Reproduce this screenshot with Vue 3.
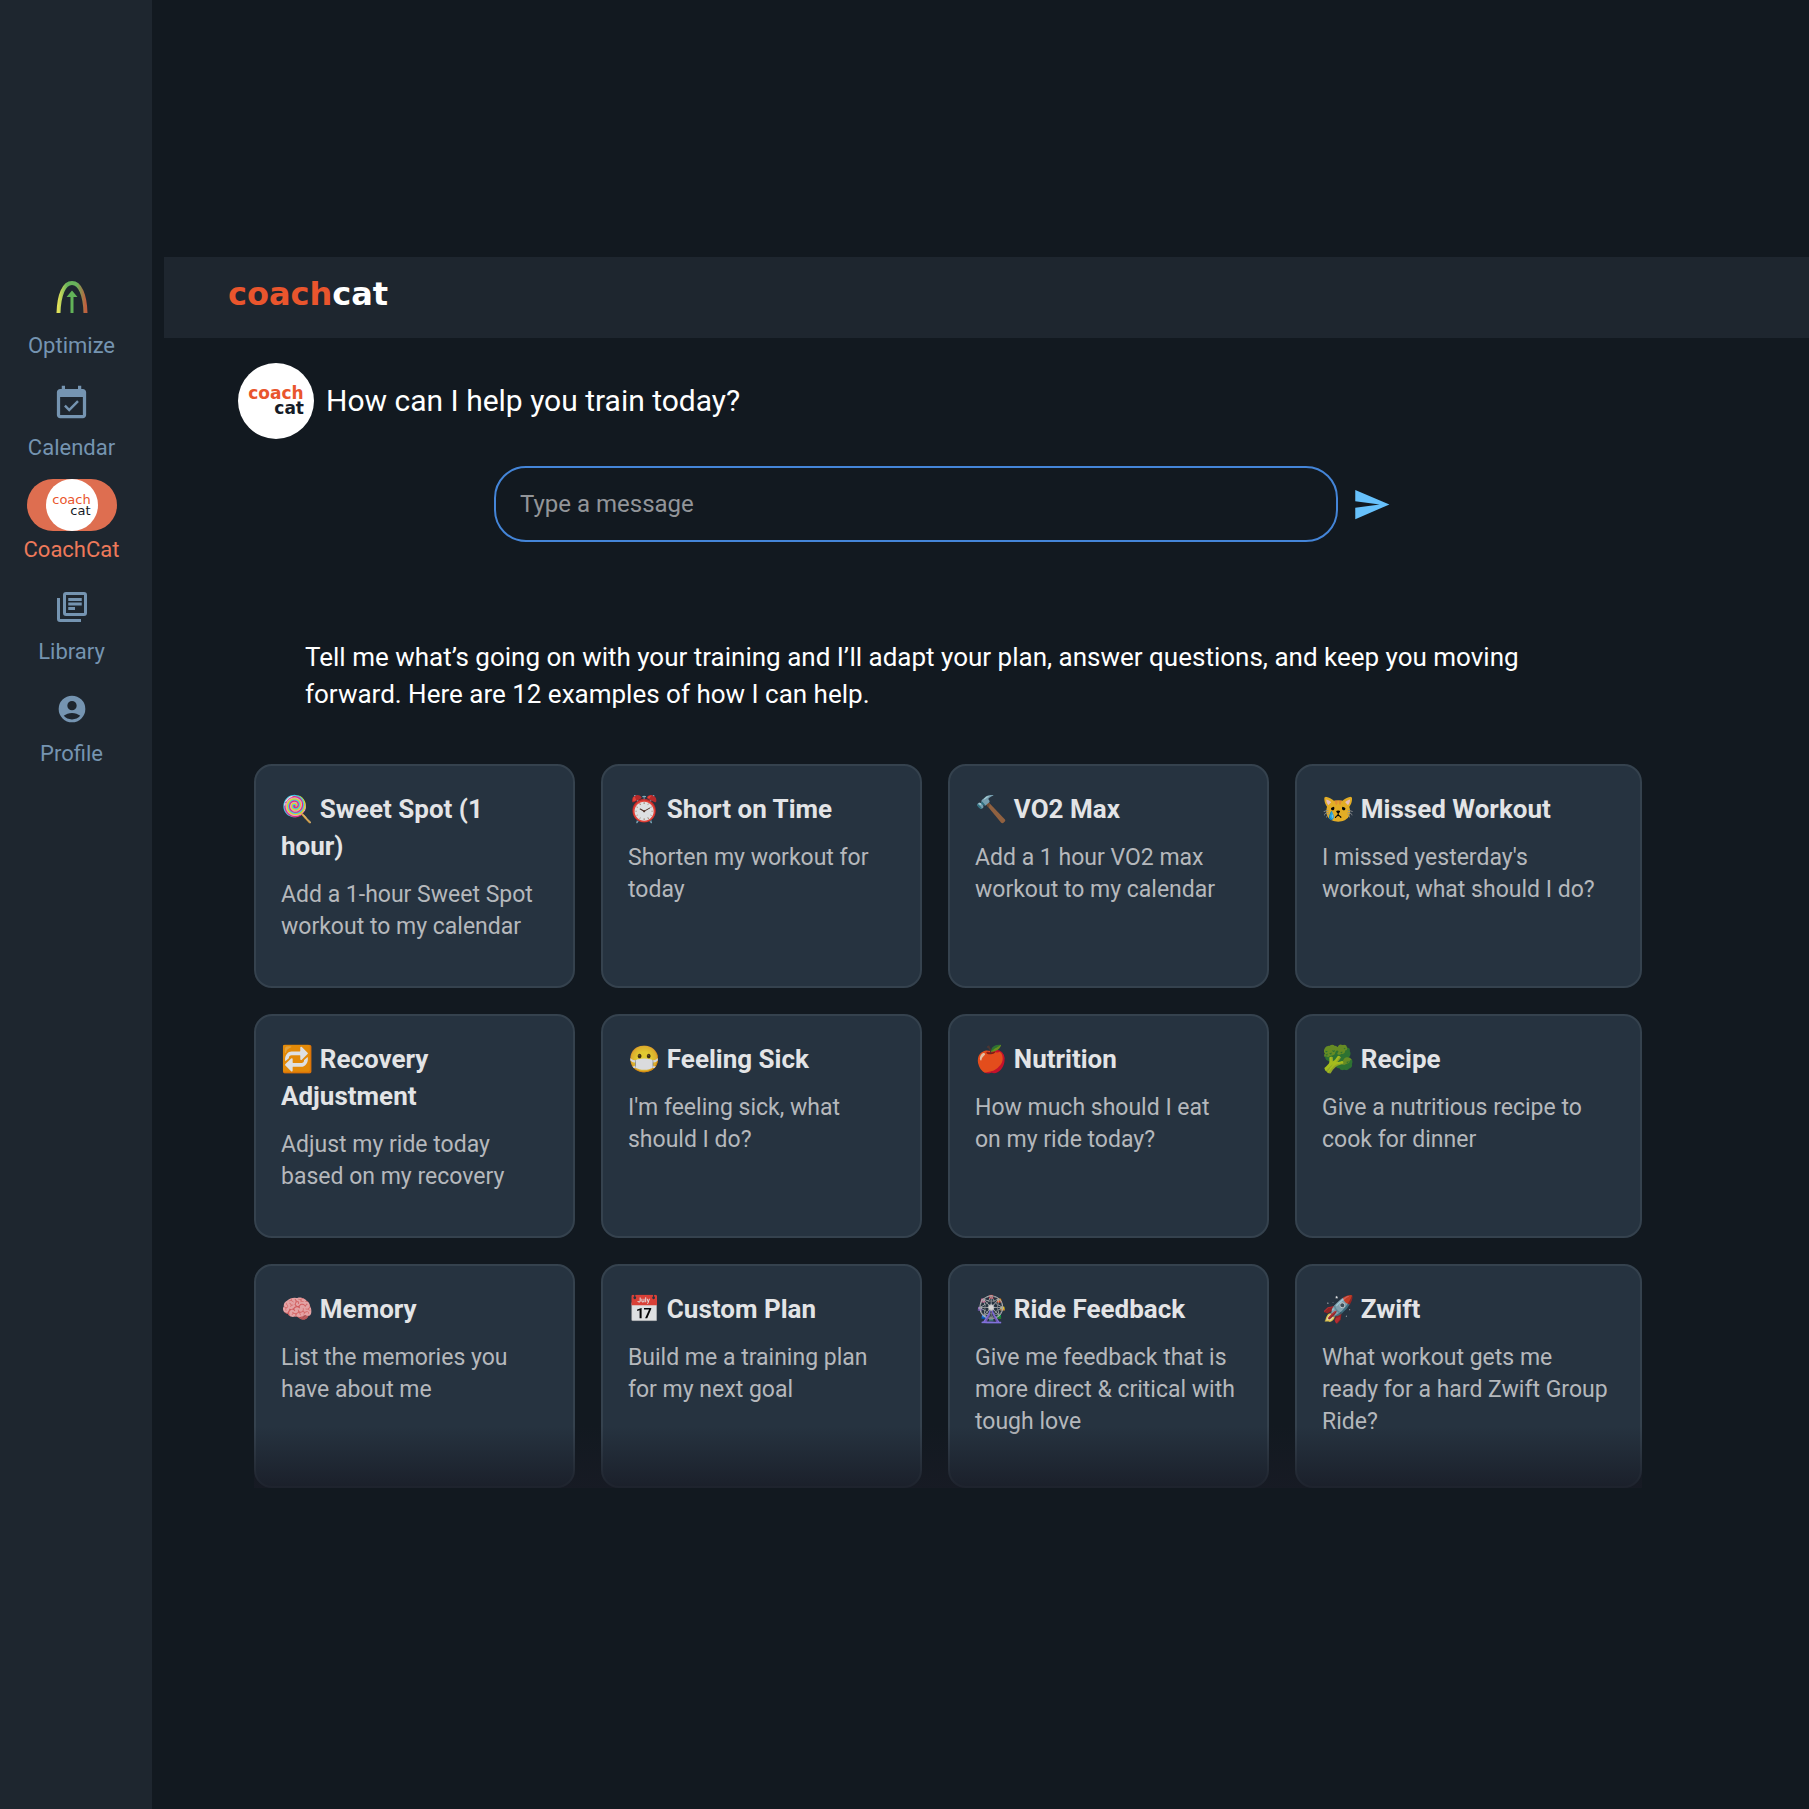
<script setup>
import { ref } from "vue"
const message = ref("")
const active = ref("CoachCat")
const navItems = ["Optimize", "Calendar", "CoachCat", "Library", "Profile"]
const cards = [
  { icon: "🍭", title: "Sweet Spot (1 hour)", text: "Add a 1-hour Sweet Spot workout to my calendar" },
  { icon: "⏰", title: "Short on Time", text: "Shorten my workout for today" },
  { icon: "🔨", title: "VO2 Max", text: "Add a 1 hour VO2 max workout to my calendar" },
  { icon: "😿", title: "Missed Workout", text: "I missed yesterday's workout, what should I do?" },
  { icon: "🔁", title: "Recovery Adjustment", text: "Adjust my ride today based on my recovery" },
  { icon: "😷", title: "Feeling Sick", text: "I'm feeling sick, what should I do?" },
  { icon: "🍎", title: "Nutrition", text: "How much should I eat on my ride today?" },
  { icon: "🥦", title: "Recipe", text: "Give a nutritious recipe to cook for dinner" },
  { icon: "🧠", title: "Memory", text: "List the memories you have about me" },
  { icon: "📅", title: "Custom Plan", text: "Build me a training plan for my next goal" },
  { icon: "🎡", title: "Ride Feedback", text: "Give me feedback that is more direct & critical with tough love" },
  { icon: "🚀", title: "Zwift", text: "What workout gets me ready for a hard Zwift Group Ride?" },
]
const onCard = (card) => (message.value = card.text)
const onSend = () => (message.value = "")
</script>

<template>
  <div class="app">
    <nav class="sidebar">
      <a v-for="item in navItems" :key="item" href="#" class="nav-item" :class="{ 'nav-item-on': item === active }" @click.prevent="active = item">
        <span class="nav-icon">
          <svg v-if="item === 'Optimize'" width="40" height="40" viewBox="0 0 40 40" fill="none">
            <defs>
              <linearGradient id="arch" x1="4" y1="0" x2="36" y2="0" gradientUnits="userSpaceOnUse">
                <stop offset="0.08" stop-color="#dfe05a" />
                <stop offset="0.35" stop-color="#68b35b" />
                <stop offset="0.65" stop-color="#68b35b" />
                <stop offset="0.92" stop-color="#c0603f" />
              </linearGradient>
            </defs>
            <path d="M6.500 32C7 14 12 2 20 2s13 12 13.500 30" stroke="url(#arch)" stroke-width="4" />
            <path d="M20 9.500l5.500 6.500h-4v16h-3V16h-4z" fill="#62b258" />
          </svg>
          <svg v-else-if="item === 'Calendar'" width="39" height="39" viewBox="0 0 24 24" fill="currentColor">
            <path d="M16.530 11.060L15.470 10l-4.880 4.880-2.120-2.120-1.060 1.060L10.590 17l5.940-5.940zM19 3h-1V1h-2v2H8V1H6v2H5c-1.110 0-1.990.9-1.990 2L3 19c0 1.100.89 2 2 2h14c1.100 0 2-.9 2-2V5c0-1.100-.9-2-2-2zm0 16H5V8h14v11z" />
          </svg>
          <span v-else-if="item === 'CoachCat'" class="avatar avatar-small">
            <span class="avatar-coach">coach</span>
            <span class="avatar-cat">cat</span>
          </span>
          <svg v-else-if="item === 'Library'" width="36" height="36" viewBox="0 0 24 24" fill="none" stroke="currentColor" stroke-width="2">
            <rect x="7" y="3" width="14" height="14" rx="1" />
            <path d="M3 6v14c0 .6.400 1 1 1h14M9.500 7h9M9.500 10h9M9.500 13h4.500" />
          </svg>
          <svg v-else width="32" height="32" viewBox="0 0 24 24" fill="currentColor" fill-rule="evenodd">
            <path d="M12 2a10 10 0 1 0 0 20 10 10 0 0 0 0-20zM12 6a3.500 3.500 0 1 1 0 7 3.500 3.500 0 0 1 0-7zM5.800 17.100C7.500 15.800 9.600 15 12 15s4.500.8 6.200 2.100C16.700 18.800 14.500 19.800 12 19.800s-4.700-1-6.200-2.700z" />
          </svg>
        </span>
        <span class="nav-label">{{ item }}</span>
      </a>
    </nav>

    <main class="main">
      <header class="topbar">
        <span class="logo">coach<span class="logo-cat">cat</span></span>
      </header>

      <div class="greeting">
        <span class="avatar">
          <span class="avatar-coach">coach</span>
          <span class="avatar-cat">cat</span>
        </span>
        <h1 class="greeting-text">How can I help you train today?</h1>
      </div>

      <div class="content">
        <form class="composer" @submit.prevent="onSend">
          <input v-model="message" class="composer-input" type="text" placeholder="Type a message" aria-label="Type a message" />
          <button class="composer-send" type="submit" aria-label="Send">
            <svg width="39" height="39" viewBox="0 0 24 24" fill="currentColor"><path d="M2.010 21L23 12 2.010 3 2 10l15 2-15 2z" /></svg>
          </button>
        </form>

        <p class="intro">Tell me what’s going on with your training and I’ll adapt your plan, answer questions, and keep you moving forward. Here are 12 examples of how I can help.</p>

        <div class="cards">
          <button v-for="card in cards" :key="card.title" type="button" class="card" @click="onCard(card)">
            <span class="card-title">{{ card.icon }} {{ card.title }}</span>
            <span class="card-text">{{ card.text }}</span>
          </button>
        </div>
      </div>
    </main>
  </div>
</template>

<style>
body {
  background-color: #121920;
}
</style>

<style scoped>
.app {
  display: flex;
  min-height: 100vh;
  font-family: Roboto, "Noto Color Emoji", sans-serif;
  color: #fff;
  background-color: #121920;
}

.sidebar {
  display: flex;
  flex-direction: column;
  gap: 18px;
  box-sizing: border-box;
  width: 152px;
  flex-shrink: 0;
  padding: 275px 9px 0 0;
  background-color: #1e262f;
}
.nav-item {
  display: flex;
  flex-direction: column;
  align-items: center;
  gap: 6px;
  color: #7594b1;
  text-decoration: none;
}
.nav-item-on {
  color: #ed795a;
}
.nav-icon {
  display: flex;
  justify-content: center;
  align-items: center;
  width: 90px;
  height: 52px;
  border-radius: 26px;
}
.nav-item-on .nav-icon {
  background-color: #de6e50;
}
.nav-label {
  font-size: 22px;
  line-height: 26px;
}

.avatar {
  display: flex;
  flex-direction: column;
  justify-content: center;
  align-items: center;
  width: 76px;
  height: 76px;
  flex-shrink: 0;
  border-radius: 50%;
  background-color: #fff;
  font-family: "DejaVu Sans", sans-serif;
  font-size: 17px;
  font-weight: 700;
  line-height: 15px;
}
.avatar-coach {
  color: #e9552d;
}
.avatar-cat {
  width: 56px;
  text-align: right;
  color: #151b27;
}
.avatar-small {
  width: 52px;
  height: 52px;
  font-size: 13px;
  font-weight: 400;
  line-height: 11px;
}
.avatar-small .avatar-cat {
  width: 38px;
}

.main {
  flex: 1;
  min-width: 0;
  padding: 257px 0 0 12px;
}
.topbar {
  display: flex;
  align-items: center;
  box-sizing: border-box;
  height: 81px;
  padding: 0 64px 8px;
  background-color: #1e262f;
}
.logo {
  font-family: "DejaVu Sans", sans-serif;
  font-size: 32px;
  font-weight: 700;
  line-height: 36px;
  color: #e9552d;
}
.logo-cat {
  color: #fff;
}
.greeting {
  display: flex;
  align-items: center;
  gap: 12px;
  padding: 25px 74px 27px;
}
.greeting-text {
  margin: 0;
  font-size: 30px;
  font-weight: 400;
  line-height: 36px;
}
.content {
  padding: 0 167px 48px 90px;
}

.composer {
  display: flex;
  align-items: center;
  gap: 8px;
  padding: 0 246px 0 240px;
}
.composer-input {
  flex: 1;
  min-width: 0;
  box-sizing: border-box;
  height: 76px;
  padding: 0 24px;
  border: 2px solid #4485d8;
  border-radius: 32px;
  outline: none;
  background: none;
  font-family: inherit;
  font-size: 24px;
  color: #fff;
}
.composer-input::placeholder {
  color: #929599;
  opacity: 1;
}
.composer-send {
  display: flex;
  justify-content: center;
  align-items: center;
  width: 50px;
  height: 50px;
  padding: 0;
  border: none;
  background: none;
  color: #67c1fb;
  cursor: pointer;
}

.intro {
  margin: 97px 51px 51px;
  font-size: 26px;
  line-height: 37px;
}

.cards {
  position: relative;
  display: grid;
  grid-template-columns: repeat(4, 1fr);
  row-gap: 26px;
}
/* fades the last row out at the bottom of the list */
.cards::after {
  content: "";
  position: absolute;
  right: 0;
  bottom: 0;
  left: 0;
  height: 62px;
  background: linear-gradient(rgba(24, 27, 37, 0), rgba(24, 27, 37, 0.8));
  pointer-events: none;
}
.card {
  display: flex;
  flex-direction: column;
  gap: 14px;
  box-sizing: border-box;
  min-height: 224px;
  margin: 0 26px 0 0;
  padding: 25px 29px 25px 25px;
  border: 2px solid #35424e;
  border-radius: 18px;
  background-color: #263340;
  font-family: inherit;
  text-align: left;
  cursor: pointer;
}
.card:nth-child(4n) {
  margin-right: 0;
}
.card-title {
  font-size: 26px;
  font-weight: 700;
  line-height: 37px;
  color: #fff;
  opacity: 0.87;
}
.card-text {
  font-size: 23px;
  line-height: 32px;
  color: #b5b8bc;
}
</style>
